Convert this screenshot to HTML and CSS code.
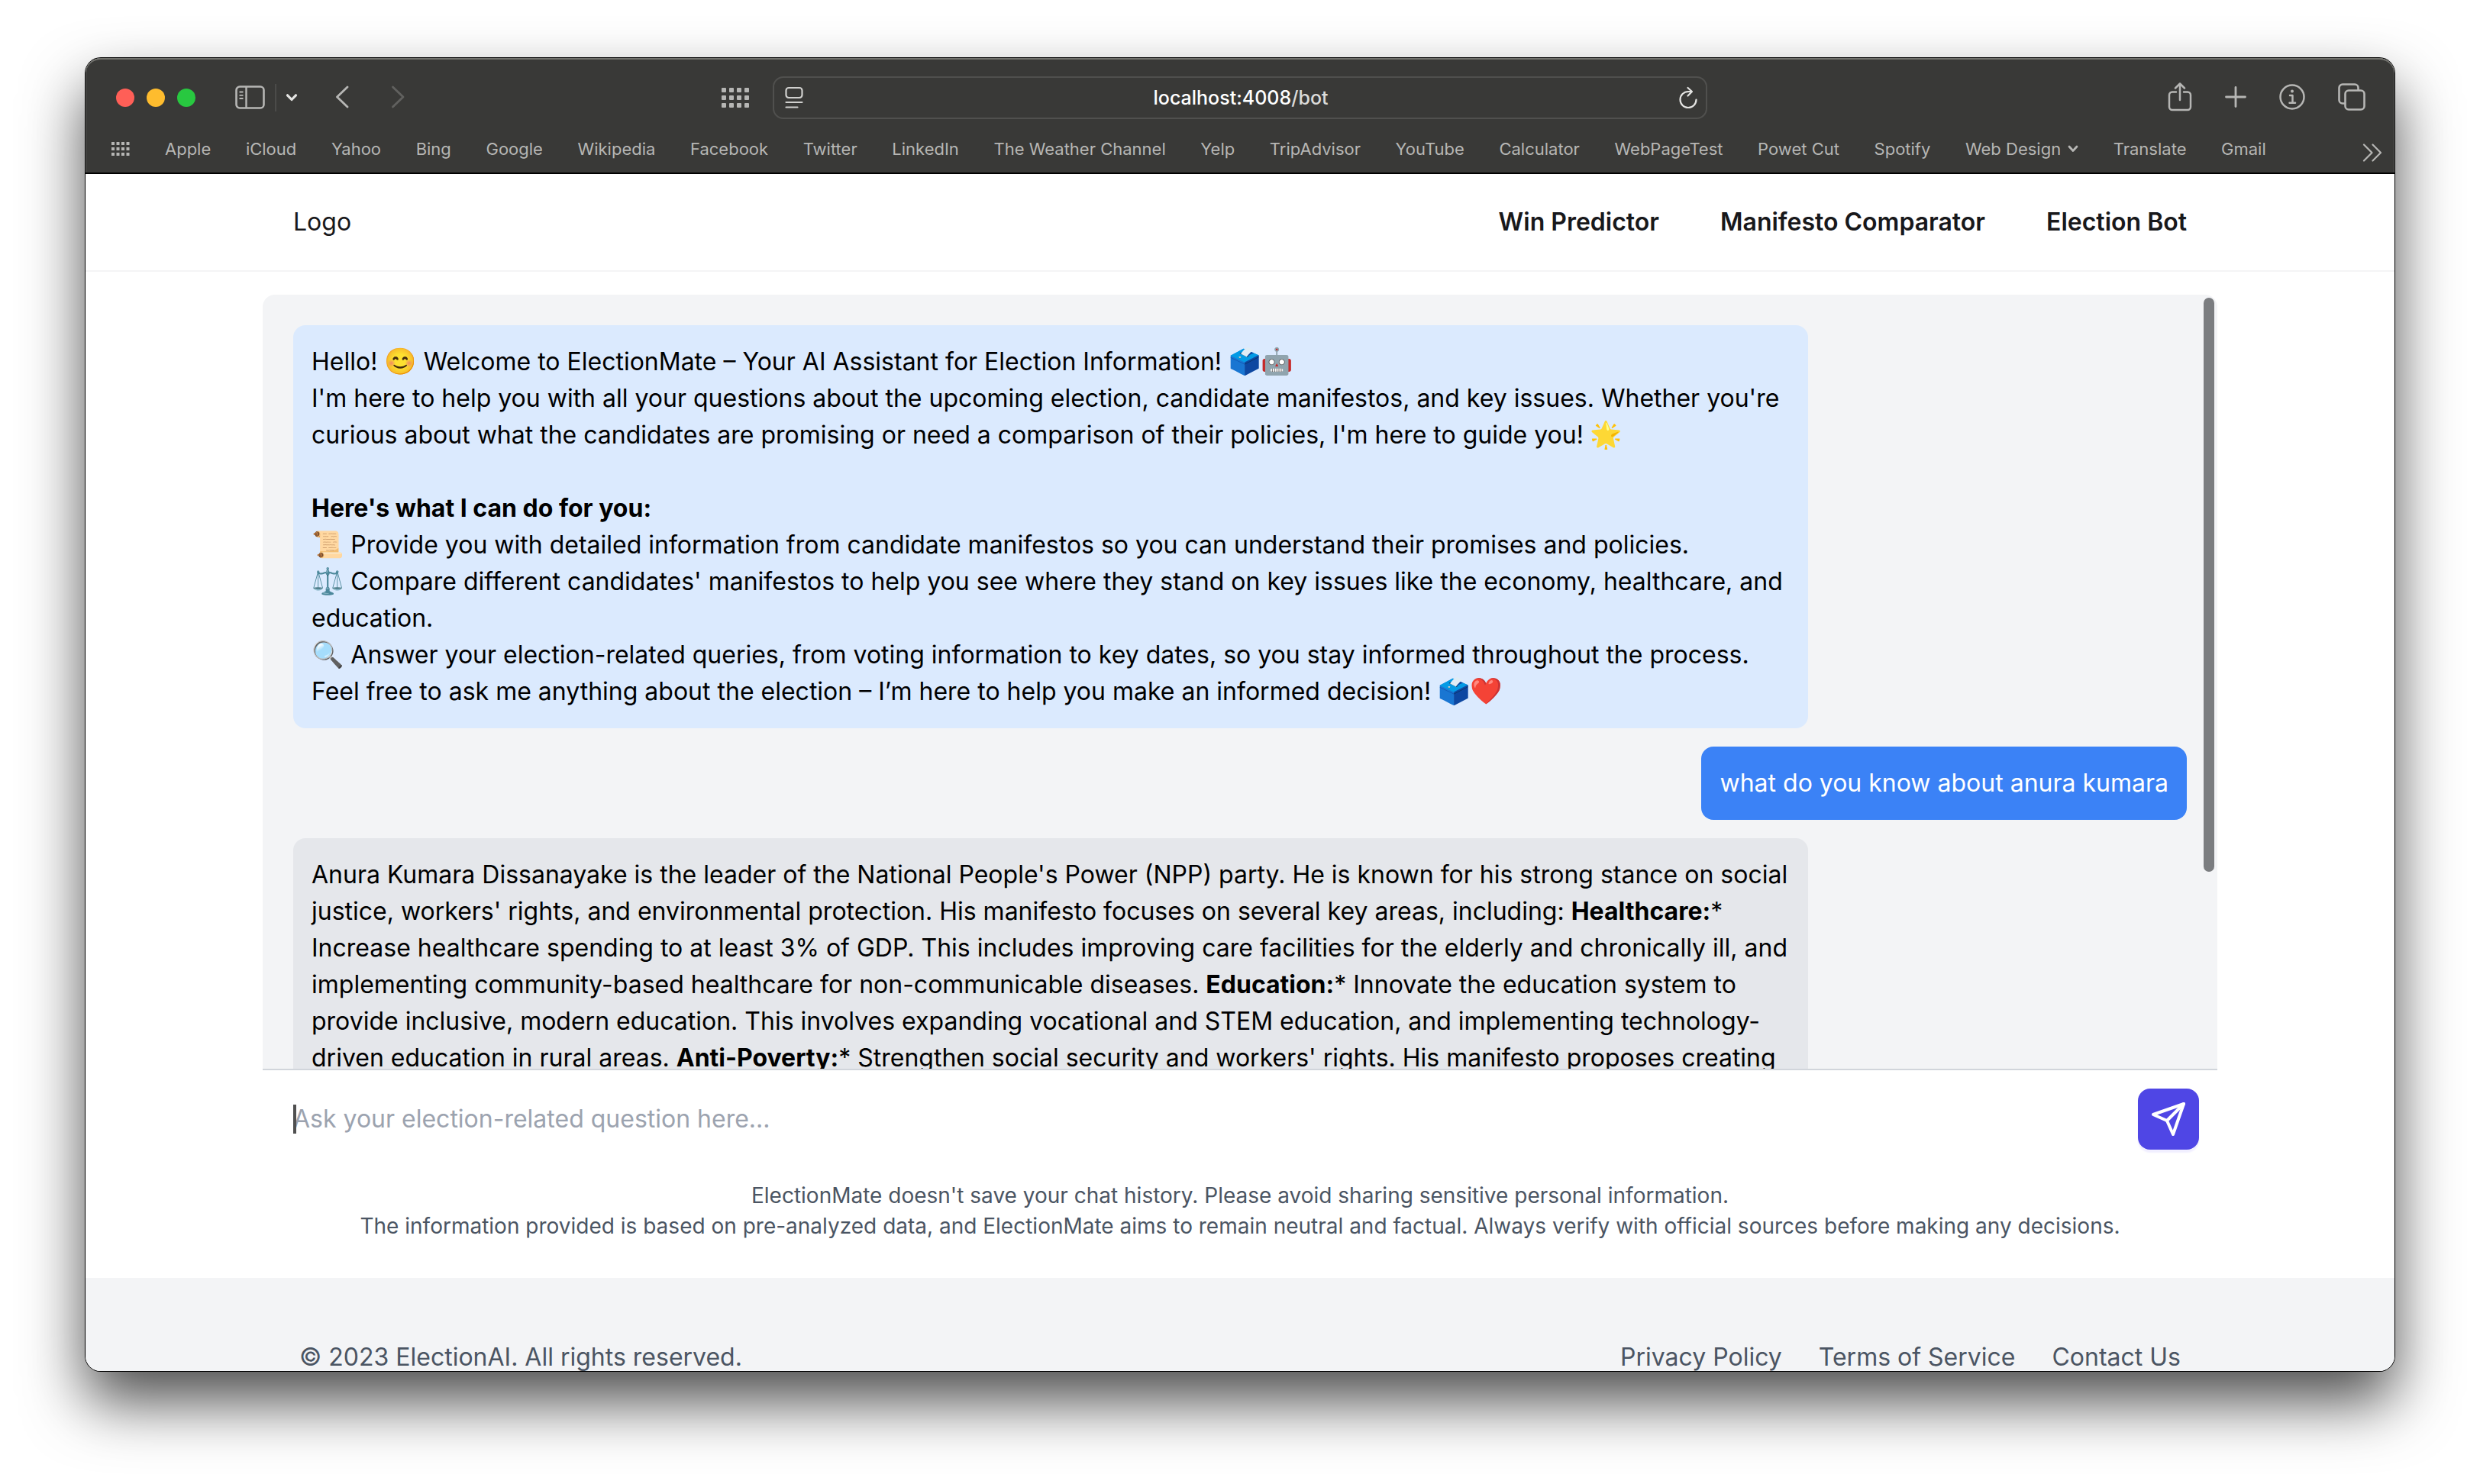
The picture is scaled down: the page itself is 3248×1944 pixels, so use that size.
FILE: index.html
```html
<!DOCTYPE html>
<html lang="en">
<head>
<meta charset="utf-8">
<meta name="viewport" content="width=device-width, initial-scale=1">
<title>ElectionMate</title>
<link rel="stylesheet" href="styles.css">
</head>
<body>
<div class="window">
  <div class="chrome">
    <div class="toolbar">
      <div class="toolbar-left">
        <div class="lights">
          <button class="light light-close" aria-label="Close"></button>
          <button class="light light-min" aria-label="Minimise"></button>
          <button class="light light-max" aria-label="Full screen"></button>
        </div>
        <button class="tool tool-sidebar" aria-label="Sidebar">
          <svg width="40" height="32" viewBox="0 0 40 32" fill="none" stroke="currentColor" stroke-width="2.600"><rect x="1.500" y="1.500" width="36" height="28" rx="4.500"/><path d="M14.500 2v27" stroke-width="2.400"/><path d="M5.500 8.500h5M5.500 12.800h5M5.500 17h5" stroke-width="1.800"/></svg>
        </button>
        <span class="tool-divider"></span>
        <button class="tool tool-groups" aria-label="Tab groups">
          <svg width="16" height="12" viewBox="0 0 16 12" fill="none" stroke="#e4e4e2" stroke-width="3.200" stroke-linecap="round" stroke-linejoin="round"><path d="M2.500 2.800l5.500 5.700 5.500-5.700"/></svg>
        </button>
        <button class="tool tool-back" aria-label="Back">
          <svg width="20" height="32" viewBox="0 0 20 32" fill="none" stroke="currentColor" stroke-width="2.800" stroke-linecap="round" stroke-linejoin="round"><path d="M15 2L1.500 15 15 28"/></svg>
        </button>
        <button class="tool tool-forward" aria-label="Forward" disabled>
          <svg width="20" height="32" viewBox="0 0 20 32" fill="none" stroke="currentColor" stroke-width="2.800" stroke-linecap="round" stroke-linejoin="round"><path d="M4.500 2L18 15 4.500 28"/></svg>
        </button>
        <button class="tool tool-start" aria-label="Start page">
          <svg width="38" height="28" viewBox="0 0 38 28" fill="currentColor"><g id="dots"><rect x="1" y="1" width="6" height="6" rx="1"/><rect x="11" y="1" width="6" height="6" rx="1"/><rect x="21" y="1" width="6" height="6" rx="1"/><rect x="31" y="1" width="6" height="6" rx="1"/></g><use href="#dots" y="10"/><use href="#dots" y="20"/></svg>
        </button>
      </div>
      <div class="address">
        <button class="tool" aria-label="Page menu">
          <svg width="24" height="30" viewBox="0 0 24 30" fill="none" stroke="#d0d0ce" stroke-width="2.200" stroke-linecap="round"><rect x="1.500" y="2" width="21" height="13" rx="3.500"/><path d="M1.500 21h21M1.500 27.500h15"/></svg>
        </button>
        <div class="url">localhost:4008<span class="url-path">/bot</span></div>
        <button class="tool" aria-label="Reload">
          <svg width="26" height="30" viewBox="0 0 26 30" fill="none" stroke="#e4e4e2" stroke-width="2.200" stroke-linecap="round" stroke-linejoin="round"><path d="M23.500 17.500A10.500 10.500 0 1 1 13 7h5M12.500 2l5.500 5-5.500 5.500"/></svg>
        </button>
      </div>
      <div class="toolbar-right">
        <button class="tool" aria-label="Share">
          <svg width="32" height="38" viewBox="0 0 32 38" fill="none" stroke="currentColor" stroke-width="2.500" stroke-linecap="round" stroke-linejoin="round"><path d="M11 12.500H6a4 4 0 0 0-4 4V32a4 4 0 0 0 4 4h20a4 4 0 0 0 4-4V16.500a4 4 0 0 0-4-4h-5M16 23V2M10 7.500L16 1.500l6 6"/></svg>
        </button>
        <button class="tool" aria-label="New tab">
          <svg width="28" height="28" viewBox="0 0 28 28" fill="none" stroke="currentColor" stroke-width="2.800" stroke-linecap="round"><path d="M14 1.500v25M1.500 14h25"/></svg>
        </button>
        <button class="tool" aria-label="Page information">
          <svg width="34" height="34" viewBox="0 0 34 34" fill="none" stroke="currentColor" stroke-width="2.500" stroke-linecap="round" stroke-linejoin="round"><circle cx="17" cy="17" r="15.500"/><path d="M14 15h3.500v9.500M13.500 24.800h7.500"/><circle cx="17" cy="9.500" r="1" fill="currentColor" stroke-width="2"/></svg>
        </button>
        <button class="tool" aria-label="Show tabs">
          <svg width="36" height="36" viewBox="0 0 36 36" fill="none" stroke="currentColor" stroke-width="2.600" stroke-linejoin="round"><rect x="9.500" y="9.500" width="25" height="25" rx="4.500"/><path d="M9.500 26.500H6a4.500 4.500 0 0 1-4.500-4.500V6A4.500 4.500 0 0 1 6 1.500h16A4.500 4.500 0 0 1 26.500 6v3"/></svg>
        </button>
      </div>
    </div>
    <nav class="bookmarks" aria-label="Favourites">
      <svg class="bookmarks-grid" width="24" height="18" viewBox="0 0 24 18" fill="currentColor"><g id="minis"><rect x="0" y="0" width="4" height="4"/><rect x="6.500" y="0" width="4" height="4"/><rect x="13" y="0" width="4" height="4"/><rect x="19.500" y="0" width="4" height="4"/></g><use href="#minis" y="7"/><use href="#minis" y="14"/></svg>
      <ul class="bookmark-list">
        <li><a href="#">Apple</a></li><li><a href="#">iCloud</a></li><li><a href="#">Yahoo</a></li><li><a href="#">Bing</a></li><li><a href="#">Google</a></li><li><a href="#">Wikipedia</a></li><li><a href="#">Facebook</a></li><li><a href="#">Twitter</a></li><li><a href="#">LinkedIn</a></li><li><a href="#">The Weather Channel</a></li><li><a href="#">Yelp</a></li><li><a href="#">TripAdvisor</a></li><li><a href="#">YouTube</a></li><li><a href="#">Calculator</a></li><li><a href="#">WebPageTest</a></li><li><a href="#">Powet Cut</a></li><li><a href="#">Spotify</a></li>
        <li><a class="bookmark-folder" href="#">Web Design <svg width="14" height="10" viewBox="0 0 14 10" fill="none" stroke="currentColor" stroke-width="2.800" stroke-linecap="round" stroke-linejoin="round"><path d="M2 2l5 5.500L12 2"/></svg></a></li>
        <li><a href="#">Translate</a></li><li><a href="#">Gmail</a></li>
      </ul>
      <button class="tool bookmarks-more" aria-label="More favourites">
        <svg width="26" height="24" viewBox="0 0 26 24" fill="none" stroke="currentColor" stroke-width="2.200" stroke-linecap="round" stroke-linejoin="round"><path d="M2 1.500L12.500 12 2 22.500M13.500 1.500L24 12 13.500 22.500"/></svg>
      </button>
    </nav>
  </div>

  <div class="viewport">
    <div class="screen">
      <header class="site-header">
        <div class="header-inner">
          <a class="logo" href="#">Logo</a>
          <nav class="site-nav">
            <a href="#">Win Predictor</a>
            <a href="#">Manifesto Comparator</a>
            <a href="#">Election Bot</a>
          </nav>
        </div>
      </header>
      <main class="chat">
        <div class="messages">
          <div class="bubble bubble-intro">
            <p>Hello! <span class="emoji">😊</span> Welcome to ElectionMate – Your AI Assistant for Election Information! <span class="emoji">🗳️🤖</span></p>
            <p>I'm here to help you with all your questions about the upcoming election, candidate manifestos, and key issues. Whether you're curious about what the candidates are promising or need a comparison of their policies, I'm here to guide you! <span class="emoji">🌟</span></p>
            <br>
            <p><strong>Here's what I can do for you:</strong></p>
            <p><span class="emoji">📜</span> Provide you with detailed information from candidate manifestos so you can understand their promises and policies.</p>
            <p><span class="emoji">⚖️</span> Compare different candidates' manifestos to help you see where they stand on key issues like the economy, healthcare, and education.</p>
            <p><span class="emoji">🔍</span> Answer your election-related queries, from voting information to key dates, so you stay informed throughout the process.</p>
            <p>Feel free to ask me anything about the election – I’m here to help you make an informed decision! <span class="emoji">🗳️❤️</span></p>
          </div>
          <div class="bubble bubble-user">what do you know about anura kumara</div>
          <div class="bubble bubble-bot">Anura Kumara Dissanayake is the leader of the National People's Power (NPP) party. He is known for his strong stance on social justice, workers' rights, and environmental protection. His manifesto focuses on several key areas, including: <strong>Healthcare:</strong>* Increase healthcare spending to at least 3% of GDP. This includes improving care facilities for the elderly and chronically ill, and implementing community-based healthcare for non-communicable diseases. <strong>Education:</strong>* Innovate the education system to provide inclusive, modern education. This involves expanding vocational and STEM education, and implementing technology-driven education in rural areas. <strong>Anti-Poverty:</strong>* Strengthen social security and workers' rights. His manifesto proposes creating</div>
          <span class="scroll-thumb"></span>
        </div>
        <form class="composer">
          <div class="field">
            <input class="question" type="text" aria-label="Your question" placeholder="Ask your election-related question here...">
            <span class="caret"></span>
          </div>
          <button class="send" type="button" aria-label="Send">
            <svg width="48" height="48" viewBox="0 0 24 24" fill="none" stroke="currentColor" stroke-width="2" stroke-linecap="round" stroke-linejoin="round"><path d="m22 2-7 20-4-9-9-4Z"/><path d="M22 2 11 13"/></svg>
          </button>
        </form>
        <div class="notice">
          <p>ElectionMate doesn't save your chat history. Please avoid sharing sensitive personal information.</p>
          <p>The information provided is based on pre-analyzed data, and ElectionMate aims to remain neutral and factual. Always verify with official sources before making any decisions.</p>
        </div>
      </main>
    </div>
    <footer class="site-footer">
      <div class="footer-inner">
        <p>© 2023 ElectionAI. All rights reserved.</p>
        <nav class="footer-nav">
          <a href="#">Privacy Policy</a>
          <a href="#">Terms of Service</a>
          <a href="#">Contact Us</a>
        </nav>
      </div>
    </footer>
  </div>
</div>
</body>
</html>
```
FILE: styles.css
```css
*, *::before, *::after { box-sizing: border-box; }

body {
  margin: 0;
  height: 100vh;
  padding: 76px 112px 148px;
  background: #fff;
  color: #000;
  font: 32px/48px Inter, "Liberation Sans", "Noto Color Emoji", sans-serif;
}

p, ul { margin: 0; padding: 0; list-style: none; }
a { color: inherit; text-decoration: none; }
button { margin: 0; padding: 0; border: 0; background: none; color: inherit; font: inherit; }
svg { display: block; flex: none; }

/* Browser window */
.window {
  display: flex;
  flex-direction: column;
  height: 100%;
  overflow: hidden;
  border-radius: 20px;
  background: #fff;
  box-shadow: 0 0 0 1px #000, 0 40px 80px rgba(0, 0, 0, .7);
}

.chrome {
  flex: none;
  border-bottom: 2px solid #000;
  border-radius: 20px 20px 0 0;
  background: #393937;
  box-shadow: inset 0 2px 0 #72726d, inset 1px 0 0 #60605e, inset -1px 0 0 #60605e;
  color: #b6b6b4;
}

.toolbar {
  display: grid;
  grid-template-columns: 1fr minmax(0, 1224px) 1fr;
  align-items: center;
  height: 104px;
}

.toolbar-left { display: flex; align-items: center; padding: 0 30px 0 40px; }
.lights { display: flex; gap: 16px; }
.light { width: 24px; height: 24px; border-radius: 50%; }
.light-close { background: #ff5f57; }
.light-min { background: #febc2e; }
.light-max { background: #28c840; }
.tool { display: flex; align-items: center; justify-content: center; }
.tool-sidebar { margin-left: 52px; }
.tool-divider { width: 2px; height: 36px; margin: 0 12px; background: #4b4b49; }
.tool-back { margin-left: 50px; }
.tool-forward { margin-left: 50px; color: #61615f; }
.tool-start { margin-left: auto; }

.address {
  display: flex;
  align-items: center;
  justify-content: space-between;
  height: 56px;
  padding: 0 10px 0 14px;
  border: 2px solid #50504e;
  border-radius: 14px;
}
.url { color: #fff; font-size: 25px; font-weight: 500; line-height: 32px; }
.url-path { color: #dcdcda; }

.toolbar-right {
  display: flex;
  align-items: center;
  justify-content: flex-end;
  gap: 43px;
  padding: 0 38px 2px 0;
}

.bookmarks { display: flex; align-items: center; height: 46px; padding: 0 16px 16px 34px; }
.bookmark-list {
  display: flex;
  flex: 1;
  justify-content: space-between;
  margin: 0 126px 0 46px;
  font-size: 22px;
  line-height: 30px;
  white-space: nowrap;
}
.bookmark-folder { display: flex; align-items: center; gap: 9px; }
.bookmarks-more { margin-top: 10px; }

/* Page */
.viewport { flex: 1; min-height: 0; overflow: hidden; }
.screen { display: flex; flex-direction: column; height: calc(100% - 122px); }

.site-header { flex: none; border-bottom: 2px solid #f4f4f5; color: #18181b; }
.header-inner {
  display: flex;
  align-items: center;
  justify-content: space-between;
  max-width: 2560px;
  min-height: 126px;
  margin: 0 auto;
  padding: 0 40px;
}
.site-nav { display: flex; gap: 80px; font-weight: 600; }

.chat {
  display: flex;
  flex: 1;
  flex-direction: column;
  width: 100%;
  max-width: 2560px;
  min-height: 0;
  margin: 30px auto 0;
}

.messages {
  position: relative;
  display: flex;
  flex: 1;
  flex-direction: column;
  gap: 24px;
  min-height: 0;
  padding: 40px 40px 0;
  overflow: hidden;
  border-radius: 16px 16px 0 0;
  background: #f3f4f6;
}
.bubble { flex: none; align-self: flex-start; max-width: 80%; padding: 24px; border-radius: 16px; }
.bubble-intro { background: #dbeafe; }
.bubble-user { align-self: flex-end; background: #3b82f6; color: #fff; }
.bubble-bot { background: #e5e7eb; }
.emoji { font-size: 34px; line-height: 32px; }
.scroll-thumb {
  position: absolute;
  top: 4px;
  right: 4px;
  width: 14px;
  height: 752px;
  border-radius: 7px;
  background: #7b7d80;
}

.composer {
  display: flex;
  flex: none;
  align-items: center;
  gap: 24px;
  padding: 24px 24px 24px 40px;
  border-top: 2px solid #d1d5db;
}
.field { position: relative; flex: 1; }
.question {
  display: block;
  width: 100%;
  height: 48px;
  padding: 0;
  border: 0;
  outline: 0;
  background: none;
  color: #000;
  font: inherit;
}
.question::placeholder { color: #9ca3af; opacity: 1; }
.caret { position: absolute; top: 5px; left: 0; width: 4px; height: 38px; background: #505050; }
.send {
  display: flex;
  align-items: center;
  justify-content: center;
  width: 80px;
  height: 80px;
  border-radius: 16px;
  background: #4f46e5;
  box-shadow: 0 4px 2px #f1efff;
  color: #fff;
}

.notice {
  flex: none;
  padding: 16px 0 48px;
  color: #4b5563;
  font-size: 28px;
  line-height: 40px;
  text-align: center;
}

.site-footer { padding: 80px 0; background: #f3f4f6; color: #4b5563; }
.footer-inner {
  display: flex;
  justify-content: space-between;
  max-width: 2560px;
  margin: 0 auto;
  padding: 0 48px;
}
.footer-nav { display: flex; gap: 48px; }
```
